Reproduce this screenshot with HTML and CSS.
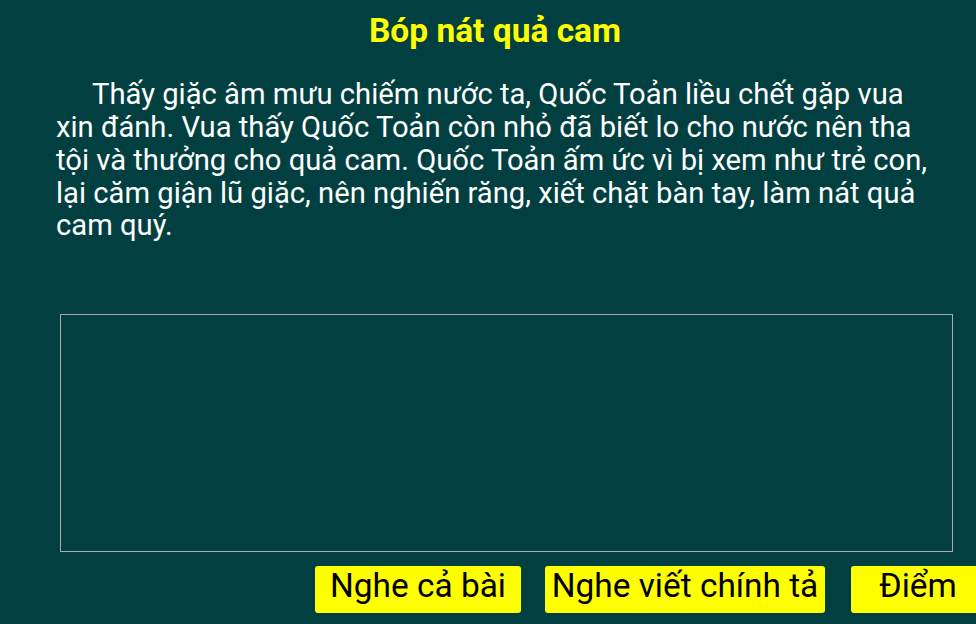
FILE: index.html
```html
<!DOCTYPE html>
<html lang="vi">
<head>
<meta charset="utf-8">
<title>Bóp nát quả cam</title>
<link rel="stylesheet" href="styles.css">
</head>
<body>
<div class="page">
  <div class="content">
    <h1 class="title">Bóp nát quả cam</h1>
    <p class="story">Thấy giặc âm mưu chiếm nước ta, Quốc Toản liều chết gặp vua xin đánh. Vua thấy Quốc Toản còn nhỏ đã biết lo cho nước nên tha tội và thưởng cho quả cam. Quốc Toản ấm ức vì bị xem như trẻ con, lại căm giận lũ giặc, nên nghiến răng, xiết chặt bàn tay, làm nát quả cam quý.</p>
  </div>
  <textarea class="answer"></textarea>
  <div class="actions">
    <button class="btn btn-listen">Nghe cả bài</button>
    <button class="btn btn-dictate">Nghe viết chính tả</button>
    <button class="btn btn-score">Điểm</button>
  </div>
</div>
</body>
</html>
```
FILE: styles.css
```css
html, body {
  margin: 0;
  padding: 0;
  background: #023f40;
  overflow: hidden;
}
body {
  font-family: Roboto, "Noto Sans", sans-serif;
  width: 976px;
  height: 624px;
}
.page {
  padding-top: 11px;
}
.content {
  margin-left: 56px;
  width: 878px;
}
.title {
  margin: 0;
  font-size: 33.5px;
  font-weight: bold;
  line-height: normal;
  color: #ffff00;
  text-align: center;
}
.story {
  margin: 28px 0 0;
  font-size: 29.2px;
  line-height: 32.85px;
  color: #ffffff;
  text-indent: 36px;
}
.answer {
  display: block;
  box-sizing: border-box;
  margin: 72px 0 0 60px;
  width: 893px;
  height: 238px;
  border: 1px solid #ababab;
  background: transparent;
  color: #fff;
  resize: none;
  outline: none;
  padding: 4px;
  font-family: Roboto, sans-serif;
  font-size: 24px;
}
.actions {
  display: flex;
  margin: 14px 0 0 315px;
  white-space: nowrap;
}
.btn {
  flex: none;
  box-sizing: border-box;
  height: 47px;
  padding: 0 0 8px;
  border: none;
  border-radius: 3px;
  background: #ffff00;
  color: #000;
  font-family: Roboto, sans-serif;
  font-size: 33.4px;
  line-height: 39px;
  text-align: center;
}
.btn-listen { width: 206px; }
.btn-dictate { width: 280px; margin-left: 24px; }
.btn-score { width: 134px; margin-left: 26px; }
```
